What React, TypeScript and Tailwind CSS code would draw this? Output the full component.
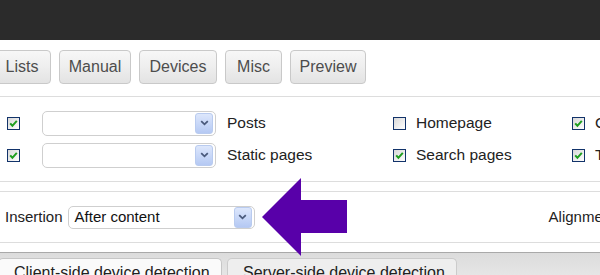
import React from "react";

const sans = { fontFamily: '"Liberation Sans", Arial, sans-serif' };

function Check({ checked }: { checked: boolean }) {
  return (
    <span className="inline-flex h-[13px] w-[13px] shrink-0 items-center justify-center border border-[#12336a] bg-gradient-to-br from-[#d8d8d8] to-[#ffffff]">
      {checked && (
        <svg width="11" height="11" viewBox="0 0 11 11">
          <path d="M2.2 5.4 L4.4 7.8 L8.8 2.8" fill="none" stroke="#1f9e1f" strokeWidth="2" />
        </svg>
      )}
    </span>
  );
}

function Select({ w, text }: { w: string; text?: string }) {
  return (
    <div className={`flex shrink-0 items-center justify-between rounded-[5px] border border-[#cfcfcf] bg-white ${w}`}>
      <span className="pl-[6px] text-[15px] text-[#111]">{text ?? ""}</span>
      <span className="mr-[2px] flex h-[21px] w-[18px] items-center justify-center rounded-[3px] border border-[#b9cbef] bg-gradient-to-b from-[#dde7fc] to-[#b5c9f3]">
        <svg width="9" height="6" viewBox="0 0 9 6">
          <path d="M1.2 1.2 L4.5 4.3 L7.8 1.2" fill="none" stroke="#4a5a7c" strokeWidth="1.8" />
        </svg>
      </span>
    </div>
  );
}

function Btn({ w, label }: { w: string; label: string }) {
  return (
    <div
      className={`flex h-[34px] shrink-0 items-center justify-center rounded-[4px] border border-[#c9c9c9] bg-gradient-to-b from-[#f7f7f7] via-[#eeeeee] to-[#e3e3e3] text-[16px] text-[#4d4d4d] ${w}`}
      style={{ fontFamily: '"Liberation Sans Narrow", "Arial Narrow", "Liberation Sans", sans-serif' }}
    >
      {label}
    </div>
  );
}

export default function App() {
  return (
    <div className="relative h-[275px] w-[600px] overflow-hidden bg-white" style={sans}>
      <div className="h-[40px] bg-[#2b2b2b]" />
      <div className="flex h-[57px] border-b border-[#dddddd] pt-[10px]">
        <div className="-ml-[7px] flex gap-[8px]">
          <Btn w="w-[58px]" label="Lists" />
          <Btn w="w-[72px]" label="Manual" />
          <Btn w="w-[78px]" label="Devices" />
          <Btn w="w-[57px]" label="Misc" />
          <Btn w="w-[76px]" label="Preview" />
        </div>
      </div>
      <div className="border-b border-[#dddddd] py-[10px] text-[15.5px] text-[#222]">
        {[
          { l: "Posts", m: "Homepage", mc: false, r: "Category pages" },
          { l: "Static pages", m: "Search pages", mc: true, r: "Tag / Archive pages" },
        ].map((row, i) => (
          <div key={i} className="flex h-[32px] items-center whitespace-nowrap">
            <div className="ml-[7px] flex shrink-0">
              <Check checked />
            </div>
            <div className="ml-[22px] flex h-[25px] shrink-0">
              <Select w="w-[174px] h-[25px]" />
            </div>
            <span className="ml-[11px] w-[166px] shrink-0">{row.l}</span>
            <Check checked={row.mc} />
            <span className="ml-[10px] w-[156px] shrink-0">{row.m}</span>
            <Check checked />
            <span className="ml-[10px] shrink-0">{row.r}</span>
          </div>
        ))}
      </div>
      <div className="mt-[9px] flex h-[52px] items-center border-y border-[#dddddd] text-[15px] text-[#222] whitespace-nowrap">
        <span className="ml-[5px] shrink-0">Insertion</span>
        <div className="ml-[5px] flex shrink-0">
          <Select w="w-[187px] h-[23px]" text="After content" />
        </div>
        <span className="ml-[294px] shrink-0">Alignment</span>
      </div>
      <div className="mt-[9px] h-[30px] border-t border-[#a9a9a9] bg-gradient-to-b from-[#dcdcdc] to-[#e8e8e8] pt-[5px]">
        <div className="-ml-[2px] flex gap-[5px] text-[16px] text-[#222] whitespace-nowrap">
          <div className="h-[30px] w-[224px] shrink-0 rounded-t-[5px] border border-b-0 border-[#c6c6c6] bg-[#fafafa] pl-[15px] pt-[4px] leading-[20px]">
            Client-side device detection
          </div>
          <div className="h-[30px] w-[230px] shrink-0 rounded-t-[5px] border border-b-0 border-[#cbcbcb] bg-[#eeeeee] pl-[15px] pt-[4px] leading-[20px]">
            Server-side device detection
          </div>
        </div>
      </div>
      <svg className="absolute left-0 top-0" width="600" height="275" viewBox="0 0 600 275">
        <polygon points="262,217 301,178 301,200 347,200 347,233 301,233 301,256" fill="#5800a9" />
      </svg>
    </div>
  );
}
